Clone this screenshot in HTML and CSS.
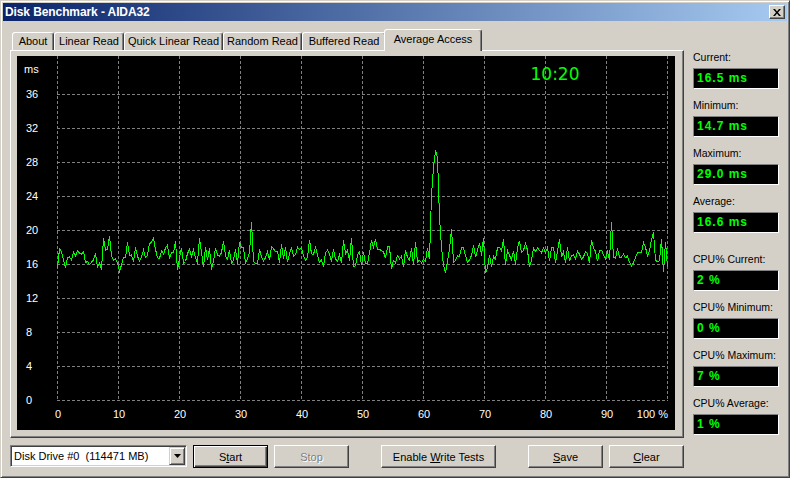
FILE: index.html
```html
<!DOCTYPE html>
<html>
<head>
<meta charset="utf-8">
<title>Disk Benchmark - AIDA32</title>
<link rel="stylesheet" href="styles.css">
</head>
<body>
<div class="window">
  <div class="titlebar">
    <span class="title">Disk Benchmark - AIDA32</span>
    <div class="close"><svg width="8" height="7" viewBox="0 0 8 7"><path d="M0 0h2l2 2.4 2-2.4h2L5 3.5 8 7H6L4 4.6 2 7H0l3-3.5z" fill="#000"/></svg></div>
  </div>
  <div class="client">
    <div class="main">
      <div class="tabs-col">
        <div class="tabstrip">
          <div class="tab t-about">About</div>
          <div class="tab t-linear">Linear Read</div>
          <div class="tab t-quick">Quick Linear Read</div>
          <div class="tab t-random">Random Read</div>
          <div class="tab t-buffered">Buffered Read</div>
          <div class="tab active">Average Access</div>
        </div>
        <div class="panel">
          <svg class="chart" width="658" height="374" viewBox="0 0 658 374">
            <g class="grid">
              <line x1="40.5" y1="0" x2="40.5" y2="344"/>
              <line x1="101.5" y1="0" x2="101.5" y2="344"/>
              <line x1="162.5" y1="0" x2="162.5" y2="344"/>
              <line x1="223.5" y1="0" x2="223.5" y2="344"/>
              <line x1="284.5" y1="0" x2="284.5" y2="344"/>
              <line x1="345.5" y1="0" x2="345.5" y2="344"/>
              <line x1="406.5" y1="0" x2="406.5" y2="344"/>
              <line x1="467.5" y1="0" x2="467.5" y2="344"/>
              <line x1="528.5" y1="0" x2="528.5" y2="344"/>
              <line x1="589.5" y1="0" x2="589.5" y2="344"/>
              <line x1="650.5" y1="0" x2="650.5" y2="344"/>
              <line x1="40" y1="38.5" x2="651" y2="38.5"/>
              <line x1="40" y1="72.5" x2="651" y2="72.5"/>
              <line x1="40" y1="106.5" x2="651" y2="106.5"/>
              <line x1="40" y1="140.5" x2="651" y2="140.5"/>
              <line x1="40" y1="174.5" x2="651" y2="174.5"/>
              <line x1="40" y1="208.5" x2="651" y2="208.5"/>
              <line x1="40" y1="242.5" x2="651" y2="242.5"/>
              <line x1="40" y1="276.5" x2="651" y2="276.5"/>
              <line x1="40" y1="310.5" x2="651" y2="310.5"/>
              <line x1="40" y1="344.5" x2="651" y2="344.5"/>
            </g>
            <g class="axis">
              <text x="7" y="17">ms</text>
              <text x="9" y="42">36</text>
              <text x="9" y="76">32</text>
              <text x="9" y="110">28</text>
              <text x="9" y="144">24</text>
              <text x="9" y="178">20</text>
              <text x="9" y="212">16</text>
              <text x="9" y="246">12</text>
              <text x="9" y="280">8</text>
              <text x="9" y="314">4</text>
              <text x="9" y="348">0</text>
            </g>
            <g class="axis mid">
              <text x="41" y="362">0</text>
              <text x="102" y="362">10</text>
              <text x="163" y="362">20</text>
              <text x="224" y="362">30</text>
              <text x="285" y="362">40</text>
              <text x="346" y="362">50</text>
              <text x="407" y="362">60</text>
              <text x="468" y="362">70</text>
              <text x="529" y="362">80</text>
              <text x="590" y="362">90</text>
            </g>
            <text class="axis end" x="651" y="362">100 %</text>
            <text class="clock" x="538" y="24">10:20</text>
            <polyline id="trace" class="trace" points=""/>
          </svg>
        </div>
      </div>
      <div class="stats">
        <div class="group">
          <div class="stat"><div class="lbl">Current:</div><div class="val">16.5 ms</div></div>
          <div class="stat"><div class="lbl">Minimum:</div><div class="val">14.7 ms</div></div>
          <div class="stat"><div class="lbl">Maximum:</div><div class="val">29.0 ms</div></div>
          <div class="stat"><div class="lbl">Average:</div><div class="val">16.6 ms</div></div>
        </div>
        <div class="group">
          <div class="stat"><div class="lbl">CPU% Current:</div><div class="val">2 %</div></div>
          <div class="stat"><div class="lbl">CPU% Minimum:</div><div class="val">0 %</div></div>
          <div class="stat"><div class="lbl">CPU% Maximum:</div><div class="val">7 %</div></div>
          <div class="stat"><div class="lbl">CPU% Average:</div><div class="val">1 %</div></div>
        </div>
      </div>
    </div>
    <div class="bottom">
      <div class="combo">
        <span class="combo-text">Disk Drive #0  (114471 MB)</span>
        <div class="drop"><svg width="7" height="4" viewBox="0 0 7 4"><path d="M0 0h7L3.5 4z" fill="#000"/></svg></div>
      </div>
      <div class="btn default"><span>S<u>t</u>art</span></div>
      <div class="btn disabled"><span>Stop</span></div>
      <div class="btn wide"><span>Enable <u>W</u>rite Tests</span></div>
      <div class="btn far"><span><u>S</u>ave</span></div>
      <div class="btn"><span><u>C</u>lear</span></div>
    </div>
  </div>
</div>
<script src="chart.js"></script>
</body>
</html>
```

FILE: styles.css
```css
* { box-sizing: border-box; }
html, body { margin: 0; padding: 0; background: #d4d0c8; }
body { font-family: "Liberation Sans", Arial, sans-serif; font-size: 11px; color: #000; }

.window {
  width: 790px; height: 478px;
  background: #d4d0c8;
  border: 1px solid; border-color: #d4d0c8 #404040 #404040 #d4d0c8;
  box-shadow: inset 1px 1px #fff, inset -1px -1px #808080;
  padding: 2px;
  display: flex; flex-direction: column;
}
.titlebar {
  height: 18px; flex: none;
  background: linear-gradient(to right, #0a246a, #a6caf0);
  display: flex; align-items: center; justify-content: space-between;
  padding: 0 2px 0 2px;
}
.title { color: #fff; font-weight: bold; font-size: 12px; letter-spacing: -0.1px; }
.close {
  width: 16px; height: 14px;
  background: #d4d0c8;
  border: 1px solid; border-color: #fff #404040 #404040 #fff;
  box-shadow: inset -1px -1px #808080;
  display: flex; align-items: center; justify-content: center;
}
.client { padding: 7px 0 0 7px; display: flex; flex-direction: column; }
.main { display: flex; align-items: flex-start; }
.tabs-col { width: 674px; display: flex; flex-direction: column; }
.tabstrip { height: 22px; display: flex; align-items: flex-end; padding-left: 2px; position: relative; z-index: 1; }
.tab {
  height: 18px;
  border: 1px solid; border-bottom: none;
  border-color: #fff #404040 transparent #fff;
  box-shadow: inset -1px 0 #808080;
  border-radius: 3px 3px 0 0;
  text-align: center; line-height: 17px; white-space: nowrap;
  background: #d4d0c8;
}
.t-about { width: 42px; }
.t-linear { width: 70px; }
.t-quick { width: 99px; }
.t-random { width: 79px; }
.t-buffered { width: 84px; }
.tab.active { width: 98px; height: 22px; margin-left: -2px; margin-bottom: -1px; line-height: 18px; }

.panel {
  height: 388px;
  border: 1px solid; border-color: #fff #404040 #404040 #fff;
  box-shadow: inset -1px -1px #808080;
  padding: 5px 7px 7px 6px;
}
.chart { display: block; background: #000; }
.grid line { stroke: #808080; stroke-width: 1; stroke-dasharray: 3 2; shape-rendering: crispEdges; }
.axis text, text.axis { fill: #fff; font-family: "Liberation Sans", Arial, sans-serif; font-size: 11px; }
.axis.mid text { text-anchor: middle; }
text.end { text-anchor: end; }
.clock { fill: #00ff00; font-family: "DejaVu Sans", sans-serif; font-size: 17px; text-anchor: middle; }
.trace { fill: none; stroke: #00ff00; stroke-width: 1; shape-rendering: crispEdges; }

.stats { margin-left: 9px; width: 86px; padding-top: 22px; display: flex; flex-direction: column; gap: 19px; }
.group { display: flex; flex-direction: column; gap: 9px; }
.stat { display: flex; flex-direction: column; gap: 4px; }
.lbl { height: 14px; line-height: 14px; white-space: nowrap; font-size: 10.5px; }
.val {
  height: 21px; background: #000;
  border: 1px solid; border-color: #808080 #fff #fff #808080;
  color: #00ff00; font-weight: bold; font-size: 12px; letter-spacing: 1px;
  padding-left: 3px; line-height: 19px; white-space: nowrap;
}

.bottom { display: flex; align-items: flex-start; margin-top: 7px; }
.combo {
  width: 177px; height: 22px;
  display: flex; background: #fff;
  border: 1px solid; border-color: #808080 #fff #fff #808080;
  box-shadow: inset 1px 1px #404040, inset -1px -1px #d4d0c8;
  padding: 1px;
}
.combo-text { flex: 1; padding-left: 2px; line-height: 18px; white-space: pre; }
.drop {
  width: 16px; height: 18px;
  background: #d4d0c8;
  border: 1px solid; border-color: #d4d0c8 #404040 #404040 #d4d0c8;
  box-shadow: inset 1px 1px #fff, inset -1px -1px #808080;
  display: flex; align-items: center; justify-content: center;
}
.btn {
  width: 75px; height: 23px; margin-left: 6px;
  background: #d4d0c8;
  border: 1px solid; border-color: #fff #404040 #404040 #fff;
  box-shadow: inset -1px -1px #808080;
  display: flex; align-items: center; justify-content: center;
  white-space: nowrap;
}
.btn.default { border-color: #000; box-shadow: inset 1px 1px #fff, inset -1px -1px #404040, inset -2px -2px #808080; }
.btn.disabled { color: #808080; text-shadow: 1px 1px #fff; }
.btn.wide { width: 115px; margin-left: 32px; }
.btn.far { margin-left: 32px; }
```

FILE: chart.js
```js
(function () {
  function mulberry32(a) {
    return function () {
      a |= 0; a = a + 0x6D2B79F5 | 0;
      var t = Math.imul(a ^ a >>> 15, 1 | a);
      t = t + Math.imul(t ^ t >>> 7, 61 | t) ^ t;
      return ((t ^ t >>> 14) >>> 0) / 4294967296;
    };
  }
  var rnd = mulberry32(20240);
  var n = 306, vals = [];
  for (var i = 0; i < n; i++) {
    var r = rnd(), v;
    if (r < 0.10) v = 18.2 + rnd() * 1.0;
    else if (r > 0.93) v = 15.4 + rnd() * 0.6;
    else v = 16.1 + rnd() * 2.0;
    vals.push(v);
  }
  var ov = {
    103: 19.1, 109: 19.4, 118: 15.2, 127: 18.6, 151: 18.6, 177: 15.3, 222: 18.8,
    251: 21.0, 253: 16.4, 417: 16.3, 419: 16.5, 421: 16.2, 423: 16.6, 425: 16.4,
    427: 17.9, 429: 16.6, 431: 24.2, 433: 27.4, 435: 29.4, 437: 28.6, 439: 21.5,
    441: 18.0, 443: 15.9, 445: 15.0, 447: 16.4, 451: 20.2, 453: 16.3,
    463: 18.0, 485: 15.0, 518: 18.8, 559: 19.0, 611: 21.0, 613: 16.8,
    653: 19.8, 655: 16.5, 660: 19.0, 663: 15.1
  };
  for (var k in ov) {
    var idx = Math.round((Number(k) - 57) / 2);
    if (idx >= 0 && idx < n) vals[idx] = ov[k];
  }
  var pts = vals.map(function (v, j) {
    return (40.5 + j * 2) + ',' + (344.5 - v * 8.5).toFixed(1);
  }).join(' ');
  document.getElementById('trace').setAttribute('points', pts);
})();
```
